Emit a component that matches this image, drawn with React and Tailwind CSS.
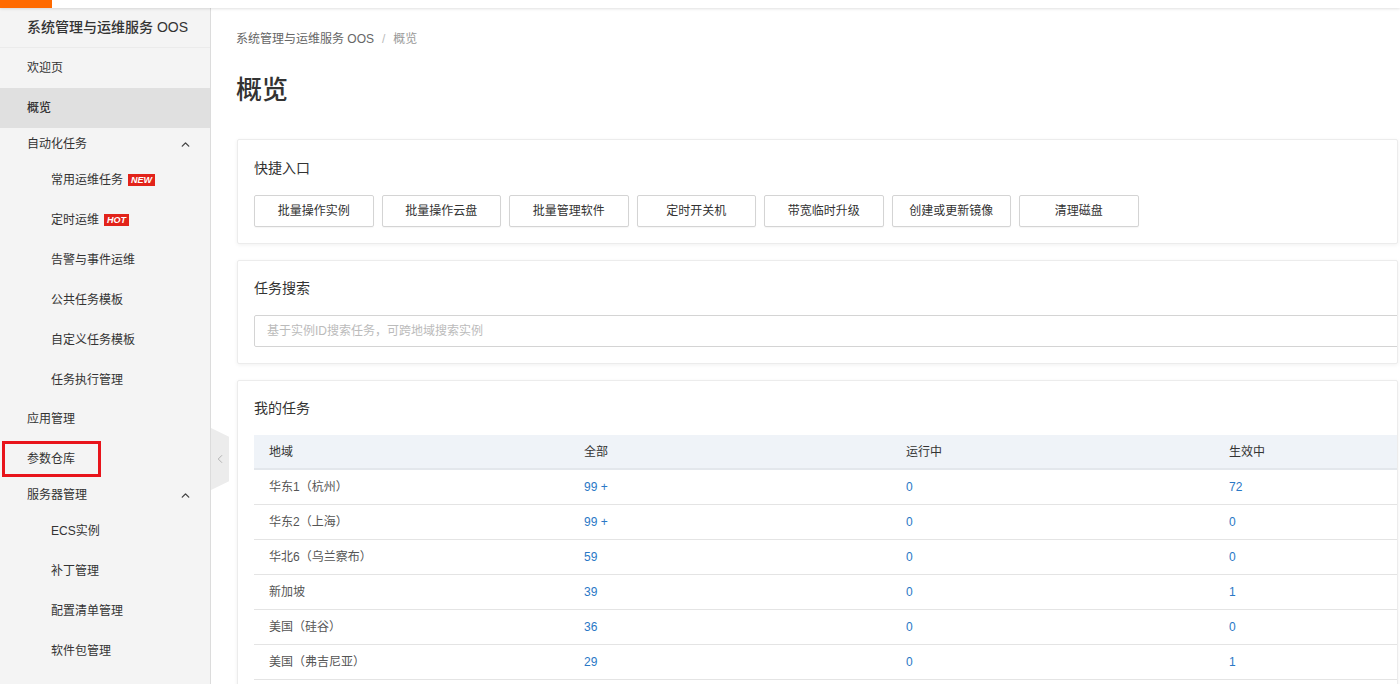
import { ChevronUp, ChevronLeft } from 'lucide-react';

const font = { fontFamily: '"Liberation Sans", "Noto Sans CJK SC", sans-serif' };

const quickLinks = ['批量操作实例', '批量操作云盘', '批量管理软件', '定时开关机', '带宽临时升级', '创建或更新镜像', '清理磁盘'];

const rows = [
  { region: '华东1（杭州）', all: '99 +', running: '0', active: '72' },
  { region: '华东2（上海）', all: '99 +', running: '0', active: '0' },
  { region: '华北6（乌兰察布）', all: '59', running: '0', active: '0' },
  { region: '新加坡', all: '39', running: '0', active: '1' },
  { region: '美国（硅谷）', all: '36', running: '0', active: '0' },
  { region: '美国（弗吉尼亚）', all: '29', running: '0', active: '1' },
];

function Tag({ children }) {
  return (
    <span className="ml-[5px] inline-flex h-[12px] items-center bg-[#e2231a] px-[3px] text-[9px] font-bold italic leading-none text-white">
      {children}
    </span>
  );
}

function NavItem({ children, sub, active, className = '' }) {
  return (
    <div
      className={
        'relative flex h-10 items-center text-[12px] text-[#333] ' +
        (sub ? 'pl-[51px] ' : 'pl-[27px] ') +
        (active ? 'bg-[#e0e0e0] font-medium ' : '') +
        className
      }
    >
      {children}
    </div>
  );
}

function NavGroup({ children }) {
  return (
    <div className="flex h-8 items-center justify-between pl-[27px] pr-[18px] text-[12px] text-[#333]">
      <span>{children}</span>
      <ChevronUp className="h-[13px] w-[13px] text-[#444]" strokeWidth={2.5} />
    </div>
  );
}

function Sidebar() {
  return (
    <aside className="relative w-[211px] shrink-0 border-r border-[#dcdcdc] bg-[#f4f4f4]">
      <div className="flex h-10 items-center border-b border-[#ebebeb] pl-[27px] text-[14px] font-medium text-[#333]">
        系统管理与运维服务 OOS
      </div>
      <NavItem>欢迎页</NavItem>
      <NavItem active>概览</NavItem>
      <NavGroup>自动化任务</NavGroup>
      <NavItem sub>常用运维任务<Tag>NEW</Tag></NavItem>
      <NavItem sub>定时运维<Tag>HOT</Tag></NavItem>
      <NavItem sub>告警与事件运维</NavItem>
      <NavItem sub>公共任务模板</NavItem>
      <NavItem sub>自定义任务模板</NavItem>
      <NavItem sub>任务执行管理</NavItem>
      <NavItem className="-mt-px">应用管理</NavItem>
      <NavItem>
        参数仓库
        <span className="absolute left-[2px] top-[2px] h-[36px] w-[99px] border-[3px] border-[#e8141b]" />
      </NavItem>
      <NavGroup>服务器管理</NavGroup>
      <NavItem sub>ECS实例</NavItem>
      <NavItem sub>补丁管理</NavItem>
      <NavItem sub>配置清单管理</NavItem>
      <NavItem sub>软件包管理</NavItem>

      {/* collapse handle */}
      <div className="absolute right-[-19px] top-[420px] flex h-[62px] w-[18px] items-center justify-center bg-[#ececec] [clip-path:polygon(0_0,100%_14%,100%_86%,0_100%)]">
        <ChevronLeft className="h-[14px] w-[14px] text-[#aaa]" strokeWidth={1.5} />
      </div>
    </aside>
  );
}

function Card({ title, children, className = '' }) {
  return (
    <section className={'overflow-hidden rounded-[2px] border border-[#ececec] bg-white pl-[16px] shadow-[0_1px_4px_rgba(0,0,0,0.06)] ' + className}>
      <h3 className="text-[14px] leading-5 text-[#333]">{title}</h3>
      {children}
    </section>
  );
}

export default function App() {
  return (
    <div className="flex h-[684px] flex-col overflow-hidden bg-white" style={font}>
      <div className="relative z-10 flex h-2 shrink-0 bg-white shadow-[0_1px_3px_rgba(0,0,0,0.12)]">
        <div className="w-[52px] bg-[#ff6a00]" />
      </div>
      <div className="flex min-h-0 flex-1">
        <Sidebar />
        <main className="min-w-0 flex-1 overflow-hidden pl-[25px] pr-[2px] pt-[21px]">
          <div className="flex items-center text-[12px] leading-5 text-[#666]">
            <span>系统管理与运维服务 OOS</span>
            <span className="mx-[8px] text-[#bbb]">/</span>
            <span className="text-[#999]">概览</span>
          </div>
          <h1 className="mt-[23px] text-[26px] font-medium leading-9 text-[#333]">概览</h1>

          <Card title="快捷入口" className="ml-[1px] mt-[31px] pb-[16px] pt-[18px]">
            <div className="mt-[17px] flex gap-[8px]">
              {quickLinks.map((q) => (
                <button
                  key={q}
                  className="flex h-8 w-[119.5px] items-center justify-center rounded-[2px] border border-[#d4d4d4] bg-white text-[12px] text-[#333] shadow-[0_1px_1px_rgba(0,0,0,0.04)]"
                >
                  {q}
                </button>
              ))}
            </div>
          </Card>

          <Card title="任务搜索" className="ml-[1px] mt-[16px] pb-[16px] pt-[17px]">
            <div className="mt-[17px] flex h-8 w-[1200px] items-center rounded-[2px] border border-[#d4d4d4] pl-[12px] text-[12px] text-[#bbb]">
              基于实例ID搜索任务，可跨地域搜索实例
            </div>
          </Card>

          <Card title="我的任务" className="ml-[1px] mt-[16px] pb-4 pt-[17px]">
            <div className="mt-[17px] w-[1250px] text-[12px]">
              <div className="grid h-[35px] grid-cols-[315px_322px_323px_1fr] items-center border-b-2 border-[#e3e7ec] bg-[#eff3f8] text-[#333]">
                <div className="px-[15px]">地域</div>
                <div className="px-[15px]">全部</div>
                <div className="px-[15px]">运行中</div>
                <div className="px-[15px]">生效中</div>
              </div>
              {rows.map((r) => (
                <div
                  key={r.region}
                  className="grid h-[35px] grid-cols-[315px_322px_323px_1fr] items-center border-b border-[#e4e4e4] text-[#2a78c6]"
                >
                  <div className="px-[15px] text-[#555]">{r.region}</div>
                  <div className="px-[15px]">{r.all}</div>
                  <div className="px-[15px]">{r.running}</div>
                  <div className="px-[15px]">{r.active}</div>
                </div>
              ))}
            </div>
          </Card>
        </main>
      </div>
    </div>
  );
}
